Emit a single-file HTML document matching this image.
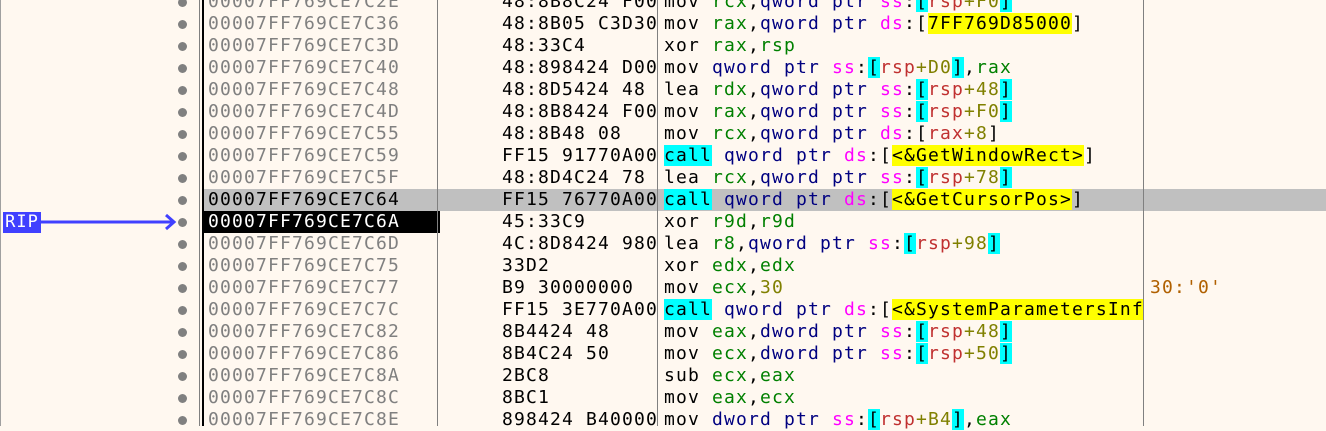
<!DOCTYPE html>
<html><head><style>
html,body{margin:0;padding:0;}
body{width:1326px;height:426px;overflow:hidden;background:#fff8f0;position:relative;font-family:"DejaVu Sans Mono","Liberation Mono",monospace;font-size:18px;letter-spacing:1.16px;}
.row{position:absolute;left:0;width:1326px;height:22px;line-height:22px;white-space:pre;}
.c{position:absolute;top:0;height:22px;overflow:hidden;}
.a{left:208px;width:232px;color:#808080;}
.b{left:502px;width:155px;color:#000;}
.d{left:664px;width:479px;color:#000;}
.k{left:1150px;width:176px;color:#b06000;}
.dot{position:absolute;left:178px;top:7px;width:9px;height:9px;border-radius:50%;background:#808080;}
.r{color:#008000}.q{color:#000080}.s{color:#ff00ff}.br{background:#00ffff}
.m{color:#c03030}.o{color:#808000}.y{background:#ffff00}.cl{background:#00ffff}
.vl{position:absolute;top:0;height:426px;}
</style></head><body>
<div style="position:absolute;left:0;top:0;width:1px;height:426px;background:#a0a0a0"></div>
<div style="position:absolute;left:203px;top:189px;width:1123px;height:22px;background:#c0c0c0"></div>
<div style="position:absolute;left:203px;top:211px;width:237px;height:22px;background:#000"></div>
<div class="vl" style="left:199px;width:1px;background:#808080"></div>
<div class="vl" style="left:202px;width:2px;background:#000"></div>
<div class="vl" style="left:437px;width:1px;background:#808080"></div>
<div class="vl" style="left:657px;width:1px;background:#808080"></div>
<div class="vl" style="left:1143px;width:1px;background:#808080"></div>

<div class="row" style="top:-9px"><div class="dot"></div><div class="c a">00007FF769CE7C2E</div><div class="c b">48:8B8C24 F00</div><div class="c d">mov <span class="r">rcx</span>,<span class="q">qword ptr</span> <span class="s">ss</span>:<span class="br">[</span><span class="m">rsp</span><span class="o">+F0</span><span class="br">]</span></div></div>
<div class="row" style="top:13px"><div class="dot"></div><div class="c a">00007FF769CE7C36</div><div class="c b">48:8B05 C3D30</div><div class="c d">mov <span class="r">rax</span>,<span class="q">qword ptr</span> <span class="s">ds</span>:[<span class="y">7FF769D85000</span>]</div></div>
<div class="row" style="top:35px"><div class="dot"></div><div class="c a">00007FF769CE7C3D</div><div class="c b">48:33C4</div><div class="c d">xor <span class="r">rax</span>,<span class="r">rsp</span></div></div>
<div class="row" style="top:57px"><div class="dot"></div><div class="c a">00007FF769CE7C40</div><div class="c b">48:898424 D00</div><div class="c d">mov <span class="q">qword ptr</span> <span class="s">ss</span>:<span class="br">[</span><span class="m">rsp</span><span class="o">+D0</span><span class="br">]</span>,<span class="r">rax</span></div></div>
<div class="row" style="top:79px"><div class="dot"></div><div class="c a">00007FF769CE7C48</div><div class="c b">48:8D5424 48</div><div class="c d">lea <span class="r">rdx</span>,<span class="q">qword ptr</span> <span class="s">ss</span>:<span class="br">[</span><span class="m">rsp</span><span class="o">+48</span><span class="br">]</span></div></div>
<div class="row" style="top:101px"><div class="dot"></div><div class="c a">00007FF769CE7C4D</div><div class="c b">48:8B8424 F00</div><div class="c d">mov <span class="r">rax</span>,<span class="q">qword ptr</span> <span class="s">ss</span>:<span class="br">[</span><span class="m">rsp</span><span class="o">+F0</span><span class="br">]</span></div></div>
<div class="row" style="top:123px"><div class="dot"></div><div class="c a">00007FF769CE7C55</div><div class="c b">48:8B48 08</div><div class="c d">mov <span class="r">rcx</span>,<span class="q">qword ptr</span> <span class="s">ds</span>:[<span class="m">rax</span><span class="o">+8</span>]</div></div>
<div class="row" style="top:145px"><div class="dot"></div><div class="c a">00007FF769CE7C59</div><div class="c b">FF15 91770A00</div><div class="c d"><span class="cl">call</span> <span class="q">qword ptr</span> <span class="s">ds</span>:[<span class="y">&lt;&amp;GetWindowRect&gt;</span>]</div></div>
<div class="row" style="top:167px"><div class="dot"></div><div class="c a">00007FF769CE7C5F</div><div class="c b">48:8D4C24 78</div><div class="c d">lea <span class="r">rcx</span>,<span class="q">qword ptr</span> <span class="s">ss</span>:<span class="br">[</span><span class="m">rsp</span><span class="o">+78</span><span class="br">]</span></div></div>
<div class="row" style="top:189px"><div class="dot"></div><div class="c a" style="color:#000">00007FF769CE7C64</div><div class="c b">FF15 76770A00</div><div class="c d"><span class="cl">call</span> <span class="q">qword ptr</span> <span class="s">ds</span>:[<span class="y">&lt;&amp;GetCursorPos&gt;</span>]</div></div>
<div class="row" style="top:211px"><div class="dot"></div><div class="c a" style="color:#fff">00007FF769CE7C6A</div><div class="c b">45:33C9</div><div class="c d">xor <span class="r">r9d</span>,<span class="r">r9d</span></div></div>
<div class="row" style="top:233px"><div class="dot"></div><div class="c a">00007FF769CE7C6D</div><div class="c b">4C:8D8424 980</div><div class="c d">lea <span class="r">r8</span>,<span class="q">qword ptr</span> <span class="s">ss</span>:<span class="br">[</span><span class="m">rsp</span><span class="o">+98</span><span class="br">]</span></div></div>
<div class="row" style="top:255px"><div class="dot"></div><div class="c a">00007FF769CE7C75</div><div class="c b">33D2</div><div class="c d">xor <span class="r">edx</span>,<span class="r">edx</span></div></div>
<div class="row" style="top:277px"><div class="dot"></div><div class="c a">00007FF769CE7C77</div><div class="c b">B9 30000000</div><div class="c d">mov <span class="r">ecx</span>,<span class="o">30</span></div><div class="c k">30:'0'</div></div>
<div class="row" style="top:299px"><div class="dot"></div><div class="c a">00007FF769CE7C7C</div><div class="c b">FF15 3E770A00</div><div class="c d"><span class="cl">call</span> <span class="q">qword ptr</span> <span class="s">ds</span>:[<span class="y">&lt;&amp;SystemParametersInf</span></div></div>
<div class="row" style="top:321px"><div class="dot"></div><div class="c a">00007FF769CE7C82</div><div class="c b">8B4424 48</div><div class="c d">mov <span class="r">eax</span>,<span class="q">dword ptr</span> <span class="s">ss</span>:<span class="br">[</span><span class="m">rsp</span><span class="o">+48</span><span class="br">]</span></div></div>
<div class="row" style="top:343px"><div class="dot"></div><div class="c a">00007FF769CE7C86</div><div class="c b">8B4C24 50</div><div class="c d">mov <span class="r">ecx</span>,<span class="q">dword ptr</span> <span class="s">ss</span>:<span class="br">[</span><span class="m">rsp</span><span class="o">+50</span><span class="br">]</span></div></div>
<div class="row" style="top:365px"><div class="dot"></div><div class="c a">00007FF769CE7C8A</div><div class="c b">2BC8</div><div class="c d">sub <span class="r">ecx</span>,<span class="r">eax</span></div></div>
<div class="row" style="top:387px"><div class="dot"></div><div class="c a">00007FF769CE7C8C</div><div class="c b">8BC1</div><div class="c d">mov <span class="r">eax</span>,<span class="r">ecx</span></div></div>
<div class="row" style="top:409px"><div class="dot"></div><div class="c a">00007FF769CE7C8E</div><div class="c b">898424 B40000</div><div class="c d">mov <span class="q">dword ptr</span> <span class="s">ss</span>:<span class="br">[</span><span class="m">rsp</span><span class="o">+B4</span><span class="br">]</span>,<span class="r">eax</span></div></div>

<div style="position:absolute;left:3px;top:212px;width:38px;height:21px;background:#4040ff;color:#fff;line-height:21px;font-size:17px;letter-spacing:1px;text-align:center;">RIP</div>
<svg style="position:absolute;left:0;top:0" width="200" height="426"><line x1="41" y1="222" x2="173" y2="222" stroke="#4040ff" stroke-width="3"/><polyline points="166,215 174,222 166,229" fill="none" stroke="#4040ff" stroke-width="3"/></svg>
</body></html>
